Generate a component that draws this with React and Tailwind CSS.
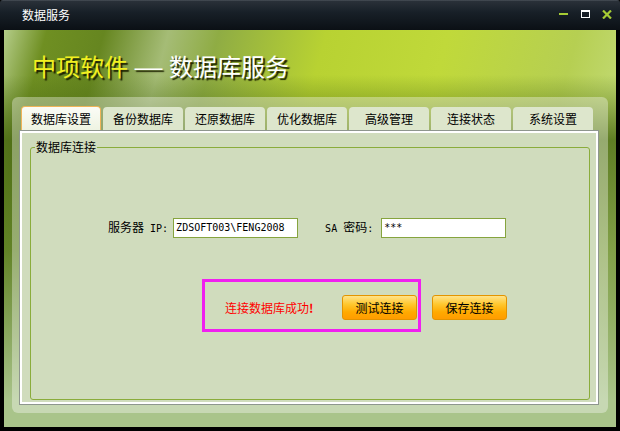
import React from "react";

const tabs = ["数据库设置", "备份数据库", "还原数据库", "优化数据库", "高级管理", "连接状态", "系统设置"];

// orange gradient button used in the connection panel
const OrangeButton = ({ children, className = "" }) => (
  <div
    className={
      "w-[75px] h-[25px] flex items-center justify-center rounded-[3px] border border-[#e39400] text-[12px] leading-[14px] text-black " +
      "[background:linear-gradient(to_bottom,#ffe38a_0%,#ffc830_35%,#ffaa00_70%,#ff9c00_100%)] " +
      className
    }
  >
    {children}
  </div>
);

const Mono = ({ children }) => (
  <span className="font-['DejaVu_Sans_Mono',monospace] text-[10px] whitespace-pre">{children}</span>
);

const App = () => {
  return (
    <div className="w-[620px] h-[431px] bg-black flex flex-col overflow-hidden font-['Noto_Sans_CJK_SC',sans-serif]">
      {/* Title bar */}
      <div className="h-[30px] shrink-0 flex items-center pl-[22px] pr-[8px] rounded-t-[3px] [background:linear-gradient(to_bottom,#555c64_0px,#2a3139_1px,#182028_40%,#0b1015_100%)]">
        <span className="text-white text-[12px] leading-[14px]">数据服务</span>
        <div className="ml-auto flex items-center h-full">
          <div className="w-[9px] h-[2px] bg-[#a6cc34] mt-[-2px]"></div>
          <div className="ml-[13px] w-[9px] h-[8px] border border-white border-t-2 mt-[-2px]"></div>
          <svg className="ml-[12px] mt-[-2px]" width="10" height="9" viewBox="0 0 10 9">
            <path d="M1 0.5 L9 8.5 M9 0.5 L1 8.5" stroke="#a6cc34" strokeWidth="2.2" />
          </svg>
        </div>
      </div>

      {/* Window body */}
      <div className="flex-1 mx-[4px] mb-[4px] flex flex-col [background:linear-gradient(to_bottom,transparent_0px,transparent_45px,rgba(70,102,16,0.8)_110px,rgba(92,126,40,0.65)_220px,#a9c48a_370px),linear-gradient(105deg,#b4cc88_0%,#6f8f22_6%,#668620_14%,#a5bc76_23%,#8fac44_30%,#b8d232_45%,#c0d93a_62%,#b6cf52_80%,#c8df84_93%,#9fba54_100%)]">
        {/* Header */}
        <div className="h-[67px] shrink-0 flex items-center pl-[28px] pt-[4px] text-[24px] leading-[28px]">
          <span className="text-[#f2f020] [text-shadow:2px_2px_1px_#1e2200]">中项软件</span>
          <span className="ml-[8px] inline-block w-[25px] text-center text-white scale-x-[1.45] [text-shadow:1px_2px_1px_#1e2200]">—</span>
          <span className="ml-[8px] text-white [text-shadow:2px_2px_1px_#1e2200]">数据库服务</span>
        </div>

        {/* Panel */}
        <div className="flex-1 mx-[8px] mb-[14px] rounded-[6px] bg-white/35 pt-[9px] pl-[7px] pr-[9px] pb-[8px] flex flex-col">
          {/* Tabs */}
          <div className="flex gap-[2px] ml-[2px] h-[24px] shrink-0">
            {tabs.map((t, i) =>
              i === 0 ? (
                <div
                  key={t}
                  className="w-[80px] flex items-center justify-center rounded-t-[4px] border border-b-0 border-[#f0b458] bg-[linear-gradient(to_bottom,#fbfcf6,#eef3e2)] text-[12px] leading-[14px] text-black"
                >
                  {t}
                </div>
              ) : (
                <div
                  key={t}
                  className="w-[80px] mt-[1px] flex items-center justify-center rounded-t-[4px] bg-[#dde6cc] text-[12px] leading-[14px] text-black"
                >
                  {t}
                </div>
              )
            )}
          </div>

          {/* Content box */}
          <div className="flex-1 flex border border-[#8e968e]">
            <div className="flex-1 flex border-2 border-white bg-[#d0dcbd] pl-[8px] pr-[6px] pt-[7px] pb-[2px]">
              <fieldset className="flex-1 border border-[#8aac3c] rounded-[3px]">
                <legend className="ml-[4px] px-[1px] text-[12px] leading-[14px] text-black">数据库连接</legend>

                <div className="mt-[64px] pl-[77px] flex items-center h-[20px] text-[12px] leading-[14px] text-black">
                  <span>
                    服务器<Mono> IP:</Mono>
                  </span>
                  <div className="ml-[5px] w-[125px] h-[20px] border border-[#86a43e] bg-white flex items-center pl-[2px]">
                    <Mono>ZDSOFT003\FENG2008</Mono>
                  </div>
                  <span className="ml-[27px]">
                    <Mono>SA </Mono>密码<Mono>:</Mono>
                  </span>
                  <div className="ml-[8px] w-[125px] h-[20px] border border-[#86a43e] bg-white flex items-center pl-[2px]">
                    <Mono>***</Mono>
                  </div>
                </div>

                <div className="mt-[41px] ml-[171px] flex items-center">
                  <div className="w-[219px] h-[53px] border-[3px] border-[#f020f0] flex items-center pl-[20px] pt-[4px]">
                    <span className="text-[#ff0000] text-[12px] leading-[14px]">
                      连接数据库成功<b>!</b>
                    </span>
                    <OrangeButton className="ml-auto mr-[1px]">测试连接</OrangeButton>
                  </div>
                  <OrangeButton className="ml-[11px] mt-[4px]">保存连接</OrangeButton>
                </div>
              </fieldset>
            </div>
          </div>
        </div>
      </div>
    </div>
  );
};

export default App;
